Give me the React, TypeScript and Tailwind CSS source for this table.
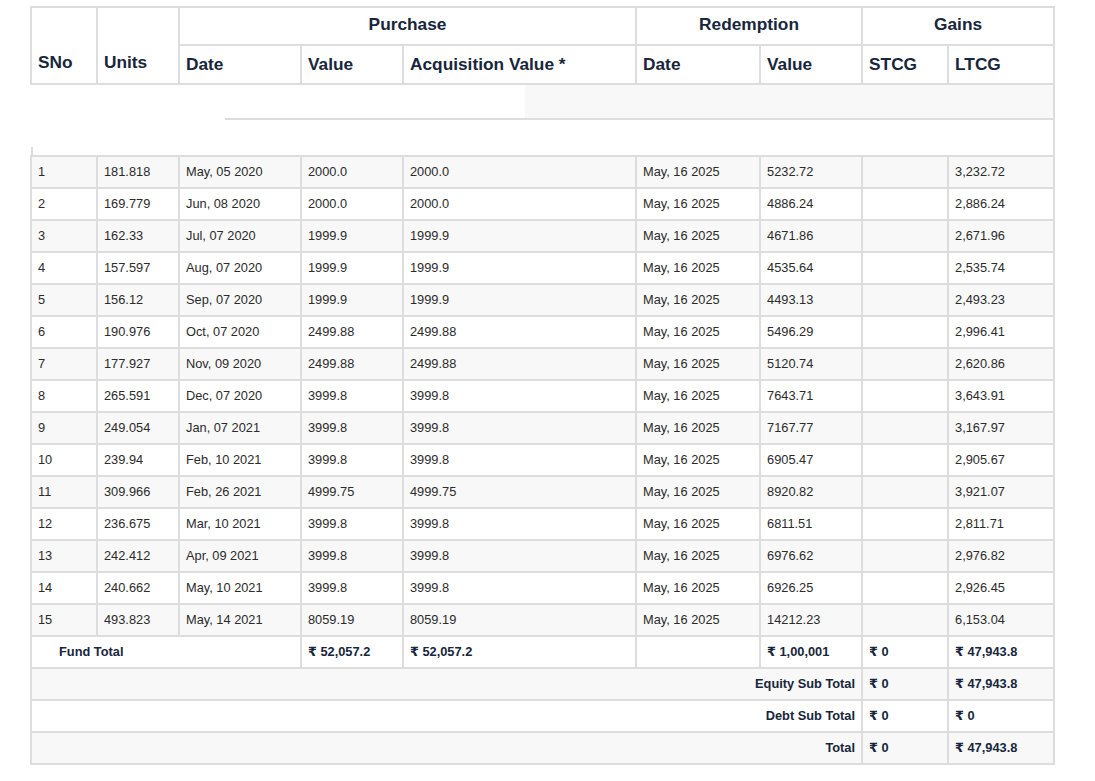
import React from "react";

const rows: string[][] = [
  ["1", "181.818", "May, 05 2020", "2000.0", "2000.0", "May, 16 2025", "5232.72", "", "3,232.72"],
  ["2", "169.779", "Jun, 08 2020", "2000.0", "2000.0", "May, 16 2025", "4886.24", "", "2,886.24"],
  ["3", "162.33", "Jul, 07 2020", "1999.9", "1999.9", "May, 16 2025", "4671.86", "", "2,671.96"],
  ["4", "157.597", "Aug, 07 2020", "1999.9", "1999.9", "May, 16 2025", "4535.64", "", "2,535.74"],
  ["5", "156.12", "Sep, 07 2020", "1999.9", "1999.9", "May, 16 2025", "4493.13", "", "2,493.23"],
  ["6", "190.976", "Oct, 07 2020", "2499.88", "2499.88", "May, 16 2025", "5496.29", "", "2,996.41"],
  ["7", "177.927", "Nov, 09 2020", "2499.88", "2499.88", "May, 16 2025", "5120.74", "", "2,620.86"],
  ["8", "265.591", "Dec, 07 2020", "3999.8", "3999.8", "May, 16 2025", "7643.71", "", "3,643.91"],
  ["9", "249.054", "Jan, 07 2021", "3999.8", "3999.8", "May, 16 2025", "7167.77", "", "3,167.97"],
  ["10", "239.94", "Feb, 10 2021", "3999.8", "3999.8", "May, 16 2025", "6905.47", "", "2,905.67"],
  ["11", "309.966", "Feb, 26 2021", "4999.75", "4999.75", "May, 16 2025", "8920.82", "", "3,921.07"],
  ["12", "236.675", "Mar, 10 2021", "3999.8", "3999.8", "May, 16 2025", "6811.51", "", "2,811.71"],
  ["13", "242.412", "Apr, 09 2021", "3999.8", "3999.8", "May, 16 2025", "6976.62", "", "2,976.82"],
  ["14", "240.662", "May, 10 2021", "3999.8", "3999.8", "May, 16 2025", "6926.25", "", "2,926.45"],
  ["15", "493.823", "May, 14 2021", "8059.19", "8059.19", "May, 16 2025", "14212.23", "", "6,153.04"],
];

const th = "border-2 border-[#dddddd] px-[6px] font-bold text-[17.3px] text-[#17263c]";
const td = "border-2 border-[#dddddd] px-[6px] py-0 h-[32px] align-middle";
const tdb = td + " font-bold text-[#17263c]";

export default function App() {
  return (
    <div
      className="min-h-[781px] w-[1095px] bg-white pl-[30px] pt-[6px]"
      style={{ fontFamily: '"Liberation Sans", Arial, "DejaVu Sans", sans-serif' }}
    >
      <table className="table-fixed border-collapse w-[1023px] text-[12.8px] text-[#2b2b2b]">
        <colgroup>
          <col className="w-[66px]" />
          <col className="w-[82px]" />
          <col className="w-[122px]" />
          <col className="w-[102px]" />
          <col className="w-[233px]" />
          <col className="w-[124px]" />
          <col className="w-[102px]" />
          <col className="w-[86px]" />
          <col className="w-[106px]" />
        </colgroup>
        <thead>
          <tr className="h-[38px]">
            <th rowSpan={2} className={th + " text-left align-bottom pb-[7px]"}>SNo</th>
            <th rowSpan={2} className={th + " text-left align-bottom pb-[7px]"}>Units</th>
            <th colSpan={3} className={th + " text-center pb-[2px]"}>Purchase</th>
            <th colSpan={2} className={th + " text-center pb-[2px]"}>Redemption</th>
            <th colSpan={2} className={th + " text-center pb-[2px]"}>Gains</th>
          </tr>
          <tr className="h-[39px]">
            <th className={th + " text-left"}>Date</th>
            <th className={th + " text-left"}>Value</th>
            <th className={th + " text-left"}>Acquisition Value *</th>
            <th className={th + " text-left"}>Date</th>
            <th className={th + " text-left"}>Value</th>
            <th className={th + " text-left"}>STCG</th>
            <th className={th + " text-left"}>LTCG</th>
          </tr>
        </thead>
        <tbody>
          <tr>
            <td colSpan={9} className="border-2 border-[#dddddd] border-l-0 border-b-0 p-0">
              <div className="flex h-[33px]">
                <div className="w-[494px] bg-white" />
                <div className="flex-1 bg-[#f8f8f8]" />
              </div>
              <div className="ml-[194px] h-[2px] bg-[#dddddd]" />
            </td>
          </tr>
          <tr>
            <td colSpan={9} className="border-2 border-[#dddddd] border-l-0 border-t-0 p-0">
              <div className="flex h-[35px] items-end">
                <div className="h-[8px] w-[2px] bg-[#dddddd]" />
              </div>
            </td>
          </tr>
          {rows.map((r, i) => (
            <tr key={i} className={i % 2 === 0 ? "bg-[#f8f8f8]" : "bg-white"}>
              {r.map((c, j) => (
                <td key={j} className={td}>{c}</td>
              ))}
            </tr>
          ))}
          <tr className="bg-white">
            <td colSpan={3} className={tdb + " pl-[27px]"}>Fund Total</td>
            <td className={tdb}>₹ 52,057.2</td>
            <td className={tdb}>₹ 52,057.2</td>
            <td className={tdb}></td>
            <td className={tdb}>₹ 1,00,001</td>
            <td className={tdb}>₹ 0</td>
            <td className={tdb}>₹ 47,943.8</td>
          </tr>
          <tr className="bg-[#f8f8f8]">
            <td colSpan={7} className={tdb + " text-right"}>Equity Sub Total</td>
            <td className={tdb}>₹ 0</td>
            <td className={tdb}>₹ 47,943.8</td>
          </tr>
          <tr className="bg-white">
            <td colSpan={7} className={tdb + " text-right"}>Debt Sub Total</td>
            <td className={tdb}>₹ 0</td>
            <td className={tdb}>₹ 0</td>
          </tr>
          <tr className="bg-[#f8f8f8]">
            <td colSpan={7} className={tdb + " text-right"}>Total</td>
            <td className={tdb}>₹ 0</td>
            <td className={tdb}>₹ 47,943.8</td>
          </tr>
        </tbody>
      </table>
    </div>
  );
}
